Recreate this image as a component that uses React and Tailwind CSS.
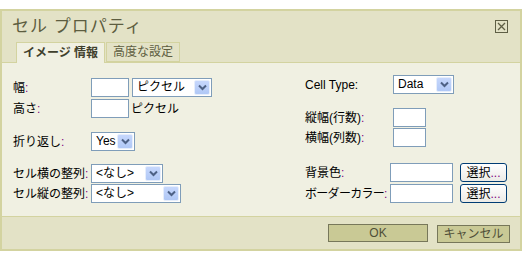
import React from "react";

const F = { fontFamily: '"Liberation Sans", "Noto Sans CJK JP", sans-serif' };

function Arrow() {
  return (
    <div className="m-px w-[16px] self-stretch rounded-[2px] border border-[#e6eefc] bg-gradient-to-b from-[#c6d7fc] to-[#b0c8f6] flex items-center justify-center">
      <svg width="9" height="7" viewBox="0 0 9 7">
        <path d="M1 1.5 L4.5 5 L8 1.5" fill="none" stroke="#4d6185" strokeWidth="2" />
      </svg>
    </div>
  );
}

function Select({ w, text }) {
  return (
    <div className={`flex h-[19px] ${w} items-stretch border border-[#7f9db9] bg-white`}>
      <div className="flex-1 pl-[4px] text-[12px] leading-[17px] text-black">{text}</div>
      <Arrow />
    </div>
  );
}

function Input({ w }) {
  return <div className={`h-[19px] ${w} border border-[#7f9db9] bg-white`} />;
}

function Btn() {
  return (
    <div className="flex h-[19px] w-[47px] items-center justify-center rounded-[3px] border border-[#003c74] bg-gradient-to-b from-white to-[#ecebe6] text-[12px] text-black">
      選択<span className="text-[#800080]">...</span>
    </div>
  );
}

function Label({ children, w, extra = "" }) {
  return (
    <div className={`${w} shrink-0 whitespace-nowrap text-[12px] text-black ${extra}`}>
      {children}
      <span className="text-[#800080]">:</span>
    </div>
  );
}

export default function App() {
  return (
    <div className="h-[269px] w-[522px] bg-white pt-[9px]" style={F}>
      <div className="flex h-[242px] flex-col border-2 border-[#d3d3a0]">
        <div className="bg-[#e3e2c6]">
          <div className="flex h-[31px] items-center justify-between pl-[10px] pr-[12px]">
            <div className="text-[17px] text-[#5d5d40] tracking-[1px]">セル プロパティ</div>
            <div className="flex h-[13px] w-[13px] items-center justify-center border border-[#5f5f45]">
              <svg width="9" height="9" viewBox="0 0 9 9">
                <path d="M1 1 L8 8 M8 1 L1 8" stroke="#5f5f45" strokeWidth="1.3" />
              </svg>
            </div>
          </div>
          <div className="flex h-[21px] items-end border-b border-[#d3d3a0] pl-[14px]">
            <div className="relative z-10 -mb-px flex h-[21px] items-center border border-b-0 border-[#d3d3a0] bg-[#f0f0e2] px-[6px] text-[12px] font-bold text-[#3f3f2c]">
              イメージ 情報
            </div>
            <div className="ml-px flex h-[20px] items-center border border-[#d3d3a0] bg-[#e3e2c6] px-[6px] text-[12px] text-[#5d5d40]">
              高度な設定
            </div>
          </div>
        </div>
        <div className="flex flex-1 bg-[#f0f0e2] pl-[11px]">
          <div className="w-[292px] shrink-0">
            <div className="mt-[15px] flex h-[19px] items-center">
              <Label w="w-[78px]">幅</Label>
              <Input w="w-[38px]" />
              <div className="ml-[3px]">
                <Select w="w-[80px]" text="ピクセル" />
              </div>
            </div>
            <div className="mt-[2px] flex h-[19px] items-center">
              <Label w="w-[78px]">高さ</Label>
              <Input w="w-[38px]" />
              <div className="ml-[2px] text-[12px] text-black">ピクセル</div>
            </div>
            <div className="mt-[14px] flex h-[19px] items-center">
              <Label w="w-[78px]">折り返し</Label>
              <Select w="w-[44px]" text="Yes" />
            </div>
            <div className="mt-[13px] flex h-[19px] items-center">
              <Label w="w-[78px]">セル横の整列</Label>
              <Select w="w-[72px]" text="<なし>" />
            </div>
            <div className="mt-px flex h-[19px] items-center">
              <Label w="w-[78px]">セル縦の整列</Label>
              <Select w="w-[90px]" text="<なし>" />
            </div>
          </div>
          <div>
            <div className="mt-[12px] flex h-[19px] items-center">
              <div className="w-[88px] shrink-0 text-[12px] text-[#000]">Cell Type:</div>
              <Select w="w-[61px]" text="Data" />
            </div>
            <div className="mt-[14px] flex h-[19px] items-center">
              <Label w="w-[88px]">縦幅(行数)</Label>
              <Input w="w-[33px]" />
            </div>
            <div className="mt-px flex h-[19px] items-center">
              <Label w="w-[88px]">横幅(列数)</Label>
              <Input w="w-[33px]" />
            </div>
            <div className="mt-[16px] flex h-[19px] items-center">
              <Label w="w-[85px]">背景色</Label>
              <Input w="w-[63px]" />
              <div className="ml-[7px]">
                <Btn />
              </div>
            </div>
            <div className="mt-[2px] flex h-[19px] items-center">
              <Label w="w-[85px]" extra="tracking-[-0.7px]">ボーダーカラー</Label>
              <Input w="w-[63px]" />
              <div className="ml-[7px]">
                <Btn />
              </div>
            </div>
          </div>
        </div>
        <div className="flex h-[33px] items-center justify-end gap-[9px] border-t border-[#d3d3a0] bg-[#e3e2c6] pr-[10px]">
          <div className="flex h-[18px] w-[100px] items-center justify-center border border-[#77775a] bg-[#c9c995] text-[12px] text-[#4f4f38]">
            OK
          </div>
          <div className="mt-[2px] flex h-[18px] w-[73px] items-center justify-center border border-[#77775a] bg-[#c9c995] text-[12px] text-[#4f4f38]">
            キャンセル
          </div>
        </div>
      </div>
    </div>
  );
}
